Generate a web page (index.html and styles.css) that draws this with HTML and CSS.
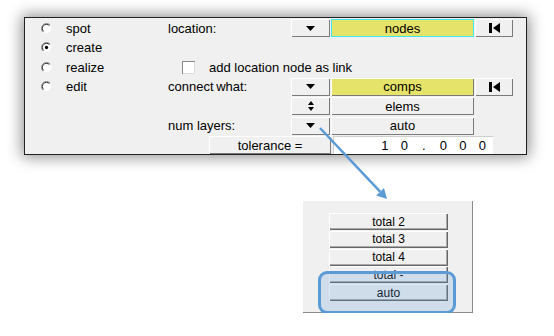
FILE: index.html
```html
<!DOCTYPE html>
<html lang="en">
<head>
  <meta charset="UTF-8">
  <title>Connectors</title>
  <link rel="stylesheet" href="styles.css">
</head>
<body>
<div class="panel">
  <div class="modes">
    <div class="mode"><svg class="radio" viewBox="0 0 12 12"><circle cx="6" cy="6" r="5" fill="#fff"/><path d="M2.1 9.9A5.5 5.5 0 0 1 9.9 2.1" fill="none" stroke="#8a8a8a"/><path d="M2.8 9.2A4.5 4.5 0 0 1 9.2 2.8" fill="none" stroke="#222"/></svg>spot</div>
    <div class="mode"><svg class="radio" viewBox="0 0 12 12"><circle cx="6" cy="6" r="5" fill="#fff"/><path d="M2.1 9.9A5.5 5.5 0 0 1 9.9 2.1" fill="none" stroke="#8a8a8a"/><path d="M2.8 9.2A4.5 4.5 0 0 1 9.2 2.8" fill="none" stroke="#222"/><circle cx="6" cy="6" r="1.8" fill="#000"/></svg>create</div>
    <div class="mode"><svg class="radio" viewBox="0 0 12 12"><circle cx="6" cy="6" r="5" fill="#fff"/><path d="M2.1 9.9A5.5 5.5 0 0 1 9.9 2.1" fill="none" stroke="#8a8a8a"/><path d="M2.8 9.2A4.5 4.5 0 0 1 9.2 2.8" fill="none" stroke="#222"/></svg>realize</div>
    <div class="mode"><svg class="radio" viewBox="0 0 12 12"><circle cx="6" cy="6" r="5" fill="#fff"/><path d="M2.1 9.9A5.5 5.5 0 0 1 9.9 2.1" fill="none" stroke="#8a8a8a"/><path d="M2.8 9.2A4.5 4.5 0 0 1 9.2 2.8" fill="none" stroke="#222"/></svg>edit</div>
  </div>

  <div class="form">
    <div class="row">
      <span class="lbl">location:</span>
      <div class="btn drop"><svg width="9" height="5"><polygon points="0,0 9,0 4.5,5"/></svg></div>
      <div class="field yellow active">nodes</div>
      <div class="btn reset"><svg width="11" height="10"><rect width="3" height="10"/><polygon points="4,5 11,0 11,10"/></svg></div>
    </div>
    <div class="row"></div>
    <div class="row">
      <span class="check"></span>
      <span class="check-lbl">add location node as link</span>
    </div>
    <div class="row">
      <span class="lbl tight">connect what:</span>
      <div class="btn drop"><svg width="9" height="5"><polygon points="0,0 9,0 4.5,5"/></svg></div>
      <div class="field yellow btn">comps</div>
      <div class="btn reset"><svg width="11" height="10"><rect width="3" height="10"/><polygon points="4,5 11,0 11,10"/></svg></div>
    </div>
    <div class="row">
      <span class="lbl"></span>
      <div class="btn drop"><svg width="6" height="10"><polygon points="0,4 3,0 6,4"/><polygon points="0,6 3,10 6,6"/></svg></div>
      <div class="field btn">elems</div>
    </div>
    <div class="row">
      <span class="lbl">num layers:</span>
      <div class="btn drop"><svg width="9" height="5"><polygon points="0,0 9,0 4.5,5"/></svg></div>
      <div class="field btn">auto</div>
    </div>
    <div class="row">
      <div class="btn tol">tolerance =</div>
      <div class="num">
        <span>1</span><span>0</span><span>.</span><span>0</span><span>0</span><span>0</span>
      </div>
    </div>
  </div>
</div>

<div class="popup">
  <div class="btn item">total 2</div>
  <div class="btn item">total 3</div>
  <div class="btn item">total 4</div>
  <div class="btn item">total -</div>
  <div class="btn item">auto</div>
  <div class="highlight"></div>
</div>

<svg class="arrow" width="554" height="336">
  <line x1="320" y1="128" x2="380.1" y2="191.7" stroke="#5b9bd5" stroke-width="2.5"/>
  <polygon points="387,199 376.2,195.4 384,188" fill="#5b9bd5"/>
</svg>
</body>
</html>
```

FILE: styles.css
```css
body {
  margin: 0;
  padding: 17px 0 0 24px;
  background: #fff;
  font-family: "Liberation Sans", Arial, sans-serif;
  font-size: 13px;
  color: #000;
}
.panel {
  width: 503px;
  height: 138px;
  box-sizing: border-box;
  border: 1px solid #222;
  background: #f0f0f0;
  box-shadow: 0 0 14px 2px rgba(0, 0, 0, 0.45);
  display: flex;
  padding-top: 1px;
}
.modes {
  width: 143px;
  padding-left: 16px;
  box-sizing: border-box;
  display: flex;
  flex-direction: column;
  gap: 1.5px;
}
.mode {
  height: 18px;
  display: flex;
  align-items: center;
}
.radio {
  width: 11px;
  height: 11px;
  margin-right: 14px;
}
.form {
  display: flex;
  flex-direction: column;
  gap: 1.5px;
}
.row {
  height: 18px;
  display: flex;
  align-items: center;
}
.lbl {
  width: 123px;
}
.tight {
  word-spacing: -1px;
}
.btn {
  height: 18px;
  box-sizing: border-box;
  background: #f0f0f0;
  box-shadow: inset 1px 1px #fff, inset -1px -1px #7a7a7a;
  display: flex;
  align-items: center;
  justify-content: center;
}
.drop {
  width: 39px;
  margin-right: 1px;
}
.reset {
  width: 38px;
}
.field {
  width: 143px;
  height: 18px;
  margin-right: 1px;
  box-sizing: border-box;
  display: flex;
  align-items: center;
  justify-content: center;
}
.yellow {
  background: #e6e36a;
}
.active {
  border: 1px solid #3ee6f0;
}
.check {
  width: 13px;
  height: 13px;
  margin-left: 14px;
  background: #fff;
  box-shadow: inset 1px 1px #8a8a8a, inset -1px -1px #dcdcdc;
}
.check-lbl {
  margin-left: 14px;
}
.tol {
  width: 122px;
  margin-left: 41px;
  margin-right: 2px;
}
.num {
  width: 160px;
  height: 18px;
  box-sizing: border-box;
  background: #fff;
  border-top: 1px solid #cfcfcf;
  border-left: 1px solid #cfcfcf;
  padding-right: 1px;
  display: flex;
  justify-content: flex-end;
  align-items: center;
}
.num span {
  width: 19.5px;
  text-align: center;
}
.popup {
  position: relative;
  width: 170px;
  height: 112px;
  box-sizing: border-box;
  margin: 46px 0 0 279px;
  padding: 12px 0 0 26px;
  background: #f0f0f0;
  border-right: 1px solid #8a8a8a;
  border-bottom: 1px solid #8a8a8a;
  display: flex;
  flex-direction: column;
  gap: 0.75px;
}
.item {
  width: 119px;
  height: 17px;
  font-size: 12px;
  box-shadow: inset 1px 1px #fff, inset -1px -1px #666, inset -2px -2px #aaa;
}
.highlight {
  position: absolute;
  left: 15px;
  top: 70px;
  width: 138px;
  height: 43px;
  box-sizing: border-box;
  border: 3px solid #5b9bd5;
  border-radius: 9px;
  background: rgba(91, 155, 213, 0.22);
}
.arrow {
  position: absolute;
  left: 0;
  top: 0;
  pointer-events: none;
}
```
